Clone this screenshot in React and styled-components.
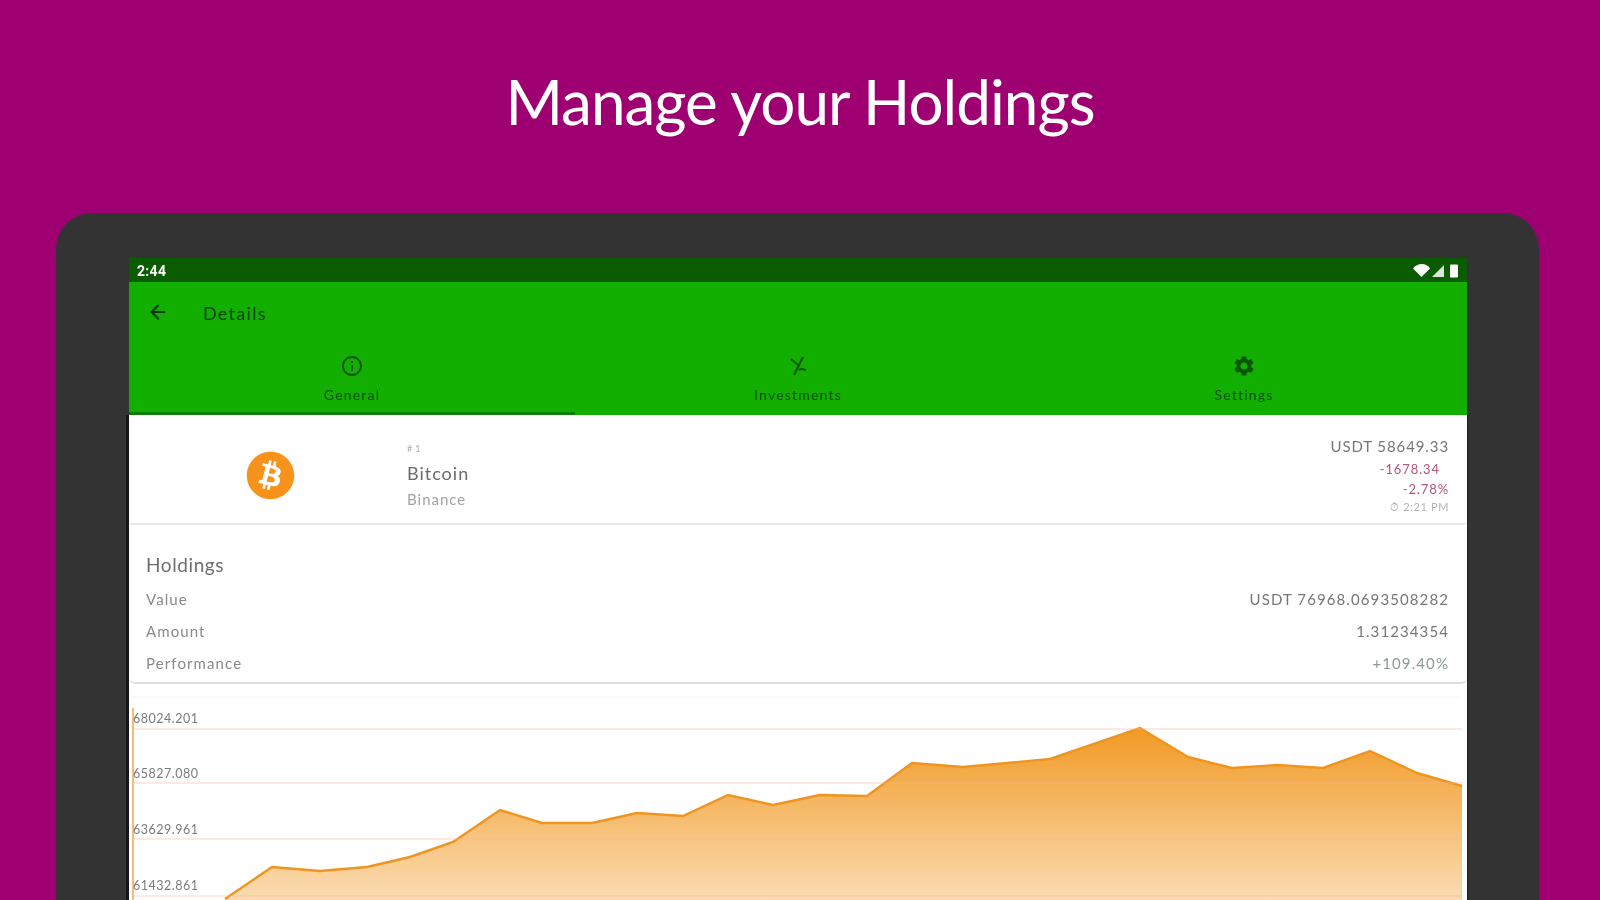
import React from "react";
import styled, { createGlobalStyle } from "styled-components";
import { ArrowLeft } from "lucide-react";
import { FaBitcoin } from "react-icons/fa";
import { MdInfoOutline, MdSettings } from "react-icons/md";

const Global = createGlobalStyle`
  html, body { margin: 0; padding: 0; background: #9e0072; }
  * { box-sizing: border-box; }
  body { font-family: "Lato", "Open Sans", sans-serif; }
`;
const Page = styled.div`
  width: 1600px; height: 900px; overflow: hidden; background: #9e0072;
  display: flex; flex-direction: column; padding: 0 61px 0 56px;
`;
const Header = styled.header`
  height: 213px; flex: none; padding: 61px 0 0 5px; display: flex; justify-content: center;
`;
const Title = styled.h1`
  margin: 0; font-size: 62px; line-height: 80px; font-weight: 400; color: #fff;
  letter-spacing: -1px; white-space: nowrap; filter: blur(.6px);
`;
const Device = styled.div`
  flex: 1; min-height: 0; background: #333; border-radius: 36px 36px 0 0;
  padding: 45px 72px 0 73px; overflow: hidden;
`;
const Screen = styled.div`
  height: 100%; display: flex; flex-direction: column; background: #fff;
`;
const StatusBar = styled.div`
  height: 24px; flex: none; background: #0b5b00; display: flex; align-items: center;
  justify-content: space-between; padding: 2px 8px 0 8px; color: #fff;
`;
const Clock = styled.span`
  font: 700 14px/1 "Roboto", sans-serif; letter-spacing: .3px; filter: blur(.7px);
`;
const AppBar = styled.div`
  height: 60px; flex: none; background: #12ae00; display: flex; align-items: center;
  padding: 0 0 0 18px; color: #0a3d05;
`;
const BackIcon = styled(ArrowLeft)`
  width: 22px; height: 22px; margin-right: 34px; color: #06360a; filter: blur(.4px);
`;
const AppTitle = styled.span`
  font-size: 18px; letter-spacing: 1.3px; padding-top: 2px; color: #063f04; filter: blur(.5px);
`;
const Tabs = styled.div`
  height: 73px; flex: none; background: #12ae00; display: grid; grid-template-columns: repeat(3, 1fr);
`;
const Tab = styled.div`
  display: flex; flex-direction: column; align-items: center; padding-top: 12px;
  border-bottom: 3px solid ${p => (p.$active ? "#0d7c03" : "transparent")};
  color: #0a5506;
`;
const TabIcon = styled.div`
  height: 24px; display: flex; align-items: center; justify-content: center; font-size: 24px;
  filter: blur(.6px);
`;
const TabLabel = styled.span`
  font-size: 14px; line-height: 18px; margin-top: 8px; letter-spacing: 1.2px; color: #075204; filter: blur(.5px);
`;
const Body = styled.div`
  flex: 1; min-height: 0; display: flex; flex-direction: column;
  box-shadow: -3px 0 0 #161616, 1px 0 0 #1e1e1e;
`;
const CoinCard = styled.section`
  height: 110px; flex: none; display: grid; grid-template-columns: 278px 1fr auto;
  border-bottom: 2px solid #e9e9ea; border-radius: 0 0 4px 4px; padding-right: 18px;
`;
const CoinLogo = styled.div`
  display: flex; align-items: center; justify-content: center; padding: 12px 0 0 4px; color: #f7931a;
  font-size: 49px;
`;
const CoinInfo = styled.div`
  display: flex; flex-direction: column; padding-top: 27px;
`;
const Rank = styled.span`
  font-size: 9px; line-height: 14px; color: #aaa; letter-spacing: 3px; filter: blur(.7px);
`;
const CoinName = styled.span`
  font-size: 18px; line-height: 24px; margin-top: 5px; letter-spacing: 1px; color: #6b6b6b; filter: blur(.7px);
`;
const Exchange = styled.span`
  font-size: 15px; line-height: 20px; margin-top: 4px; letter-spacing: 1px; color: #a3a3a3; filter: blur(.7px);
`;
const Prices = styled.div`
  display: flex; flex-direction: column; align-items: flex-end; padding-top: 22px;
`;
const Price = styled.span`
  font-size: 15px; line-height: 18px; color: #777; letter-spacing: .9px; filter: blur(.7px);
`;
const Change = styled.span`
  font-size: 13px; line-height: 20px; color: #b4557a; letter-spacing: .9px; filter: blur(.7px);
  margin-top: ${p => p.$top || 0}px; padding-right: ${p => p.$right || 0}px;
`;
const Updated = styled.span`
  font-size: 11px; line-height: 16px; letter-spacing: .6px; color: #b5b5b5; filter: blur(.7px);
`;
const HoldingsCard = styled.section`
  height: 159px; flex: none; padding: 28px 18px 3px 17px;
  border-bottom: 2px solid #dfdfe0; border-radius: 0 0 6px 6px;
`;
const Heading = styled.h2`
  margin: 0 0 6px; font-size: 19px; line-height: 24px; font-weight: 400; letter-spacing: .6px; color: #6e6e6e; filter: blur(.7px);
`;
const Row = styled.div`
  height: 32px; display: flex; align-items: center; justify-content: space-between;
  font-size: 15px; color: #8a8a8a;
`;
const RowLabel = styled.span`
  letter-spacing: 1.1px; filter: blur(.7px);
`;
const RowValue = styled.span`
  letter-spacing: 1.1px; filter: blur(.7px); color: ${p => p.$color || "#777"};
`;
const ChartArea = styled.div`
  flex: 1; min-height: 0; position: relative;
`;
const ChartSvg = styled.svg`
  display: block; width: 100%; height: 100%;
`;
const AxisLabel = styled.span`
  position: absolute; left: 4px; font-size: 12.5px; line-height: 14px; color: #7b7b7b; filter: blur(.7px);
  letter-spacing: .5px;
`;

const pts = [[225,899],[272,867],[320,871],[367,867],[410,857],[453,842],[500,810],[542,823],[592,823],[637,813],[683,816],[728,795],[773,805],[820,795],[867,796],[912,763],[963,767],[1050,759],[1140,728],[1188,757],[1232,768],[1277,765],[1323,768],[1370,751],[1417,773],[1462,786]]
  .map(([x, y]) => [x - 129, y - 684]);
const line = pts.map(p => p.join(",")).join(" ");
const area = `96,216 ${line} 1333,216`;
const grid = [45, 99, 155, 212];
const labels = [["68024.201", 28], ["65827.080", 83], ["63629.961", 139], ["61432.861", 195]];
const rows = [
  ["Value", "USDT 76968.0693508282"],
  ["Amount", "1.31234354"],
  ["Performance", "+109.40%", "#8c9a90"],
];

function StatusIcons() {
  return (
    <svg width="46" height="16" viewBox="0 0 46 16" fill="#fff">
      <path d="M0 5.5C4-.6 14-.6 17 5.5L8.5 14Z" />
      <path d="M19 14 31 2v12Z" opacity=".85" />
      <rect x="37" y="1.5" width="8" height="13" rx="1" />
    </svg>
  );
}

function InvestIcon() {
  return (
    <svg width="24" height="24" viewBox="0 0 24 24" fill="none" stroke="currentColor" strokeWidth="2">
      <path d="M17 3 8 21" />
      <path d="M5 5l7 6" />
      <path d="M13 16c2-2 4-1 7 0" />
    </svg>
  );
}

export default function App() {
  return (
    <Page>
      <Global />
      <Header><Title>Manage your Holdings</Title></Header>
      <Device>
        <Screen>
          <StatusBar><Clock>2:44</Clock><StatusIcons /></StatusBar>
          <AppBar><BackIcon strokeWidth={2.4} /><AppTitle>Details</AppTitle></AppBar>
          <Tabs>
            <Tab $active><TabIcon><MdInfoOutline /></TabIcon><TabLabel>General</TabLabel></Tab>
            <Tab><TabIcon><InvestIcon /></TabIcon><TabLabel>Investments</TabLabel></Tab>
            <Tab><TabIcon><MdSettings /></TabIcon><TabLabel>Settings</TabLabel></Tab>
          </Tabs>
          <Body>
            <CoinCard>
              <CoinLogo><FaBitcoin /></CoinLogo>
              <CoinInfo>
                <Rank>#1</Rank>
                <CoinName>Bitcoin</CoinName>
                <Exchange>Binance</Exchange>
              </CoinInfo>
              <Prices>
                <Price>USDT 58649.33</Price>
                <Change $top={4} $right={9}>-1678.34</Change>
                <Change>-2.78%</Change>
                <Updated>⏱ 2:21 PM</Updated>
              </Prices>
            </CoinCard>
            <HoldingsCard>
              <Heading>Holdings</Heading>
              {rows.map(([k, v, c]) => (
                <Row key={k}><RowLabel>{k}</RowLabel><RowValue $color={c}>{v}</RowValue></Row>
              ))}
            </HoldingsCard>
            <ChartArea>
              <ChartSvg viewBox="0 0 1338 216" preserveAspectRatio="none">
                <defs>
                  <linearGradient id="fill" x1="0" y1="44" x2="0" y2="216" gradientUnits="userSpaceOnUse">
                    <stop offset="0" stopColor="#f19a24" />
                    <stop offset="1" stopColor="#fbdcb3" />
                  </linearGradient>
                </defs>
                <polygon points={area} fill="url(#fill)" />
                <polyline points={line} fill="none" stroke="#ef951f" strokeWidth="2.4" />
                <line x1="3" x2="1333" y1="13" y2="13" stroke="#f7f7f7" strokeWidth="1" />
                {grid.map(y => (
                  <line key={y} x1="3" x2="1333" y1={y} y2={y} stroke="#f7b68e" strokeOpacity=".4" strokeWidth="1.5" />
                ))}
                <line x1="4" x2="4" y1="24" y2="216" stroke="#f5bb7b" strokeWidth="2" />
              </ChartSvg>
              {labels.map(([t, top]) => <AxisLabel key={t} style={{ top }}>{t}</AxisLabel>)}
            </ChartArea>
          </Body>
        </Screen>
      </Device>
    </Page>
  );
}
